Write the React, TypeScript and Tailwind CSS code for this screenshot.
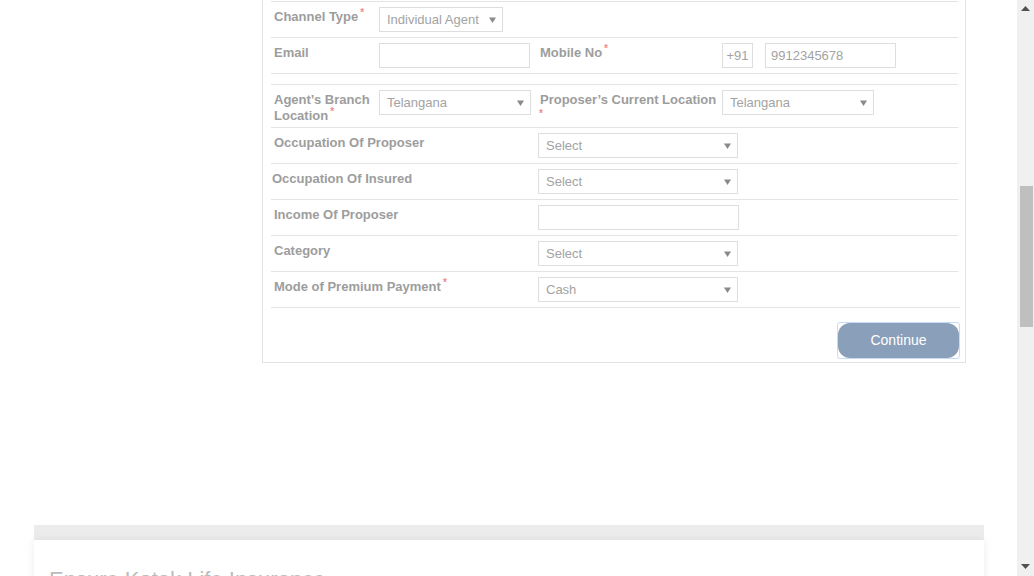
import React from "react";

const font = { fontFamily: '"Liberation Sans", Arial, sans-serif' };

function Star({ block = false }: { block?: boolean }) {
  return block ? (
    <div className="text-[10px] leading-[8px] text-[#f28b8b] ml-[-1px] mt-[2px]">*</div>
  ) : (
    <span className="relative top-[-5px] ml-[2px] text-[10px] leading-none text-[#f28b8b]">*</span>
  );
}

function Arrow() {
  return (
    <svg width="7" height="6" viewBox="0 0 7 6" className="shrink-0">
      <path d="M0 0.5 H7 L3.5 6 Z" fill="#8a8a8a" />
    </svg>
  );
}

function SelectBox({ value, w }: { value: string; w: string }) {
  return (
    <div
      className={`${w} h-[25px] border border-[#dedede] bg-white flex items-center justify-between pl-[7px] pr-[6px] text-[13px] text-[#a3a3a3]`}
    >
      <span>{value}</span>
      <Arrow />
    </div>
  );
}

function InputBox({ value = "", w }: { value?: string; w: string }) {
  return (
    <div className={`${w} h-[25px] border border-[#dedede] bg-white flex items-center pl-[5px] text-[13px] text-[#a3a3a3]`}>
      {value}
    </div>
  );
}

const labelCls = "text-[13px] leading-[16px] font-bold text-[#9d9d9d]";

function WideRow({ label, star, children, shift = false }: { label: string; star?: boolean; children: React.ReactNode; shift?: boolean }) {
  return (
    <div className="flex items-start h-[36px] border-t border-[#e4e4e4] pt-[5px]">
      <div className={`${labelCls} w-[267px] pt-[2px] ${shift ? "pl-[1px]" : "pl-[3px]"}`}>
        {label}
        {star && <Star />}
      </div>
      {children}
    </div>
  );
}

export default function App() {
  return (
    <div className="w-[1034px] h-[576px] overflow-hidden flex bg-white" style={font}>
      <div className="flex-1 flex flex-col">
        <div className="ml-[34px] w-[950px] pl-[228px] pr-[18px]">
          <div className="border-x border-b border-[#e3e3e3] pl-[8px] pr-[7px] pt-[1px] pb-[3px]">
            {/* Row 1 */}
            <div className="flex items-start h-[36px] border-t border-[#e4e4e4] pt-[5px] pl-[3px]">
              <div className={`${labelCls} w-[105px] pt-[2px]`}>
                Channel Type
                <Star />
              </div>
              <SelectBox value="Individual Agent" w="w-[124px]" />
            </div>
            {/* Row 2 */}
            <div className="flex items-start h-[36px] border-t border-[#e4e4e4] pt-[5px] pl-[3px]">
              <div className={`${labelCls} w-[105px] pt-[2px]`}>Email</div>
              <div className="w-[161px]">
                <InputBox w="w-[151px]" />
              </div>
              <div className={`${labelCls} w-[182px] pt-[2px]`}>
                Mobile No
                <Star />
              </div>
              <div className="w-[31px] h-[25px] border border-[#dedede] flex items-center justify-center text-[13px] text-[#a3a3a3]">
                +91
              </div>
              <div className="ml-[12px]">
                <InputBox value="9912345678" w="w-[131px]" />
              </div>
            </div>
            {/* spacer row */}
            <div className="h-[11px] border-t border-[#e4e4e4]" />
            {/* Row 3 */}
            <div className="flex items-start h-[43px] border-t border-[#e4e4e4] pt-[5px] pl-[3px]">
              <div className={`${labelCls} w-[105px] pt-[2px] pr-[4px]`}>
                Agent’s Branch Location
                <Star />
              </div>
              <div className="w-[161px]">
                <SelectBox value="Telangana" w="w-[152px]" />
              </div>
              <div className={`${labelCls} w-[182px] pt-[2px]`}>
                Proposer’s Current Location
                <Star block />
              </div>
              <SelectBox value="Telangana" w="w-[152px]" />
            </div>
            <WideRow label="Occupation Of Proposer">
              <SelectBox value="Select" w="w-[200px]" />
            </WideRow>
            <WideRow label="Occupation Of Insured" shift>
              <SelectBox value="Select" w="w-[200px]" />
            </WideRow>
            <WideRow label="Income Of Proposer">
              <InputBox w="w-[201px]" />
            </WideRow>
            <WideRow label="Category">
              <SelectBox value="Select" w="w-[200px]" />
            </WideRow>
            <WideRow label="Mode of Premium Payment" star>
              <SelectBox value="Cash" w="w-[200px]" />
            </WideRow>
            <div className="border-t border-[#e4e4e4] pt-[14px] flex justify-end mr-[-2px]">
              <div className="border border-[#c8daf6] rounded-[3px]">
                <button className="w-[121px] h-[35px] rounded-[12px] bg-[#8a9fba] text-white text-[14px] block">
                  Continue
                </button>
              </div>
            </div>
          </div>
        </div>
        <div className="mt-[162px] ml-[34px] w-[950px]">
          <div className="h-[15px] bg-[#ececec]" />
          <div className="bg-white shadow-[0_0_8px_rgba(0,0,0,0.08)] pt-[26px] pl-[15px] h-[80px]">
            <div className="text-[22px] leading-[28px] text-[#bcbcbc]">Ensure Kotak Life Insurance</div>
          </div>
        </div>
      </div>
      {/* scrollbar */}
      <div className="w-[17px] h-[576px] bg-[#f0f0f0] flex flex-col items-center">
        <svg width="9" height="5" viewBox="0 0 9 5" className="mt-[6px]">
          <path d="M4.5 0 L9 5 H0 Z" fill="#505050" />
        </svg>
        <div className="mt-[175px] w-[13px] h-[141px] bg-[#bfbfbf] ml-[1px]" />
        <div className="flex-1" />
        <svg width="9" height="5" viewBox="0 0 9 5" className="mb-[7px]">
          <path d="M0 0 H9 L4.5 5 Z" fill="#505050" />
        </svg>
      </div>
    </div>
  );
}
